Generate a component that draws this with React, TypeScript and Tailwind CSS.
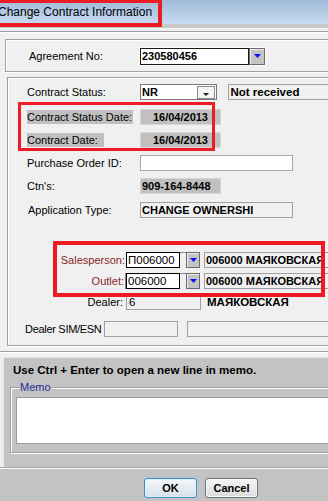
import React from 'react';

const Tri = ({ color = '#1010f0', w = 7, h = 4 }: { color?: string; w?: number; h?: number }) => (
    <svg width={w} height={h} viewBox={`0 0 ${w} ${h}`}>
        <path d={`M0 0H${w}L${w / 2} ${h}Z`} fill={color} />
    </svg>
);

function ComboBtn({ className = 'w-[15px]' }: { className?: string }) {
    return (
        <div className={`${className} h-full bg-[#c4c4c4] border border-[#6a6a6a] shadow-[inset_1px_1px_0_#ececec] flex items-center justify-center`}>
            <Tri />
        </div>
    );
}

const groupBox = 'border border-[#a0a0a0] shadow-[inset_1px_1px_0_#ffffff,1px_1px_0_#ffffff]';

function Label({ children, className = '' }: { children: React.ReactNode; className?: string }) {
    return <span className={`shrink-0 leading-[14px] whitespace-nowrap ${className}`}>{children}</span>;
}

export default function App() {
    return (
        <div className="relative w-[328px] h-[501px] overflow-hidden bg-[#f0f0f0] text-black text-[11px] font-['Liberation_Sans',Arial,sans-serif]">
            {/* title bar */}
            <div className="h-[24px] bg-gradient-to-b from-[#9fbad8] to-[#c7dcf1] flex items-center">
                <span className="-ml-[2px] text-[12px] leading-[16px] whitespace-nowrap">Change Contract Information</span>
            </div>
            <div className="h-[4px] bg-[#c8c8c8]" />

            <div className="mt-[3px] h-[2px] border-t border-[#a0a0a0] border-b border-b-white" />

            {/* agreement */}
            <div className={`mt-[6px] ml-[5px] w-[340px] h-[33px] flex items-center ${groupBox}`}>
                <Label className="ml-[23px] w-[111px]">Agreement No:</Label>
                <div className="mt-[1px] flex h-[17px] w-[125px] shadow-[0_0_0_1px_#fafafa]">
                    <div className="flex-1 bg-white border border-[#1a1a1a] pl-[1px] font-bold leading-[15px]">230580456</div>
                    <ComboBtn className="w-[16px]" />
                </div>
            </div>

            {/* contract info */}
            <div className={`mt-[5px] ml-[7px] w-[340px] h-[269px] flex flex-col ${groupBox}`}>
                <div className="mt-[6px] h-[16px] flex items-center">
                    <Label className="ml-[19px] w-[113px]">Contract Status:</Label>
                    <div className="flex h-[16px] w-[79px] bg-white border border-[#7a7a7a]">
                        <div className="flex-1 pl-[1px] font-bold leading-[14px]">NR</div>
                        <div className="w-[18px] h-[13px] mt-[1px] mr-[1px] bg-[#f4f4f4] border border-[#8a8a8a] flex items-end justify-center pb-[2px]">
                            <Tri color="#202020" w={6} h={3} />
                        </div>
                    </div>
                    <div className="ml-[11px] w-[120px] h-[16px] border border-[#a0a0a0] pl-[1px] font-bold leading-[14px] text-[11.5px]">Not received</div>
                </div>

                <div className="mt-[9px] h-[16px] flex items-center">
                    <div className="ml-[19px] w-[113px]">
                        <Label className="inline-block bg-[#c0c0c0] pr-[1px]">Contract Status Date:</Label>
                    </div>
                    <div className="w-[81px] h-[16px] bg-[#c0c0c0] border border-[#d6d6d6] text-right pr-[12px] font-bold leading-[14px]">16/04/2013</div>
                </div>

                <div className="mt-[7px] h-[16px] flex items-center">
                    <div className="ml-[19px] w-[113px]">
                        <Label className="inline-block bg-[#c0c0c0] pr-[6px]">Contract Date:</Label>
                    </div>
                    <div className="w-[81px] h-[16px] bg-[#c0c0c0] border border-[#d6d6d6] text-right pr-[12px] font-bold leading-[14px]">16/04/2013</div>
                </div>

                <div className="mt-[7px] h-[16px] flex items-center">
                    <Label className="ml-[19px] w-[113px]">Purchase Order ID:</Label>
                    <div className="w-[153px] h-[16px] bg-white border border-[#a8a8a8]" />
                </div>

                <div className="mt-[7px] h-[16px] flex items-center">
                    <Label className="ml-[19px] w-[113px]">Ctn's:</Label>
                    <div className="w-[81px] h-[16px] bg-[#c0c0c0] border border-[#d6d6d6] pl-[1px] font-bold leading-[14px]">909-164-8448</div>
                </div>

                <div className="mt-[8px] h-[16px] flex items-center">
                    <Label className="ml-[20px] w-[112px]">Application Type:</Label>
                    <div className="w-[153px] h-[16px] border border-[#a0a0a0] pl-[1px] font-bold leading-[14px] overflow-hidden whitespace-nowrap">CHANGE OWNERSHI</div>
                </div>

                <div className="mt-[34px] h-[16px] flex items-center">
                    <Label className="w-[118px] text-right pr-[1px] text-[#8a1f1f]">Salesperson:</Label>
                    <div className="flex h-[16px] w-[74px] border-t border-[#8a8a8a]">
                        <div className="w-[54px] bg-white border border-black -mt-[1px] h-[16px] pl-[1px] leading-[14px] text-[11.5px]">П006000</div>
                        <div className="ml-[6px] -mt-[1px] h-[16px]">
                            <ComboBtn className="w-[14px]" />
                        </div>
                    </div>
                    <div className="ml-[4px] w-[140px] h-[16px] border border-[#a0a0a0] pl-[1px] font-bold leading-[14px] whitespace-nowrap">006000 МАЯКОВСКАЯ</div>
                </div>

                <div className="mt-[5px] h-[16px] flex items-center">
                    <Label className="w-[117px] text-right pr-[1px] text-[#8a1f1f]">Outlet:</Label>
                    <div className="flex h-[16px] w-[75px] border-t border-l border-[#8a8a8a]">
                        <div className="w-[55px] bg-white border border-black -mt-[1px] h-[16px] pl-[1px] leading-[14px] text-[11.5px]">006000</div>
                        <div className="ml-[6px] -mt-[1px] h-[16px]">
                            <ComboBtn className="w-[14px]" />
                        </div>
                    </div>
                    <div className="ml-[4px] w-[140px] h-[16px] border border-[#a0a0a0] pl-[1px] font-bold leading-[14px] whitespace-nowrap">006000 МАЯКОВСКАЯ</div>
                </div>

                <div className="mt-[5px] h-[16px] flex items-center">
                    <Label className="w-[118px] text-right pr-[3px]">Dealer:</Label>
                    <div className="w-[75px] h-[16px] border border-[#a0a0a0] pl-[2px] leading-[14px] text-[11.5px]">6</div>
                    <div className="ml-[5px] h-[16px] pl-[1px] font-bold leading-[16px] text-[11.5px] whitespace-nowrap">МАЯКОВСКАЯ</div>
                </div>

                <div className="mt-[11px] h-[16px] flex items-center">
                    <Label className="ml-[17px] w-[79px] tracking-[-0.3px]">Dealer SIM/ESN</Label>
                    <div className="w-[74px] h-[16px] border border-[#a0a0a0]" />
                    <div className="ml-[9px] w-[160px] h-[16px] border border-[#a0a0a0]" />
                </div>
            </div>

            <div className="mt-[5px] h-[2px] border-t border-[#a0a0a0] border-b border-b-white" />

            {/* memo */}
            <div className="mt-[4px] ml-[3px] h-[110px] bg-[#c3c3c3] border-t border-l border-[#e6e6e6] flex flex-col">
                <div className="mt-[5px] ml-[9px] h-[14px] leading-[14px] font-bold text-[11.5px] whitespace-nowrap">
                    Use Ctrl + Enter to open a new line in memo.
                </div>
                <div className={`relative mt-[10px] ml-[6px] w-[340px] h-[66px] ${groupBox}`}>
                    <span className="absolute -top-[8px] left-[8px] px-[1px] bg-[#c3c3c3] leading-[14px] text-[#2a2a9c]">Memo</span>
                    <div className="mt-[9px] ml-[5px] h-[47px] bg-white border border-[#9a9a9a]" />
                </div>
            </div>
            <div className="h-[2px] border-t border-[#a8a8a8] border-b border-b-white" />

            {/* buttons */}
            <div className="h-[32px] bg-[#c3c3c3] flex items-start pt-[9px] pl-[144px] gap-[8px]">
                <button className="w-[53px] h-[20px] rounded-[3px] border border-[#3c8fd0] bg-gradient-to-b from-[#f3f7fa] to-[#d8e1e8] shadow-[inset_0_0_0_1px_#e0f0fb] font-bold leading-[18px]">
                    OK
                </button>
                <button className="w-[53px] h-[20px] rounded-[3px] border border-[#707070] bg-gradient-to-b from-[#f6f6f6] to-[#dcdcdc] shadow-[inset_0_0_0_1px_#fbfbfb] font-bold leading-[18px]">
                    Cancel
                </button>
            </div>

            {/* annotation boxes */}
            <div className="absolute -left-[4px] -top-[1px] w-[166px] h-[28px] border-[4px] border-[#ed1c24]" />
            <div className="absolute left-[18px] top-[102px] w-[197px] h-[49px] border-[3px] border-[#ed1c24]" />
            <div className="absolute left-[53px] top-[241px] w-[272px] h-[56px] border-[4px] border-[#ed1c24]" />
        </div>
    );
}
